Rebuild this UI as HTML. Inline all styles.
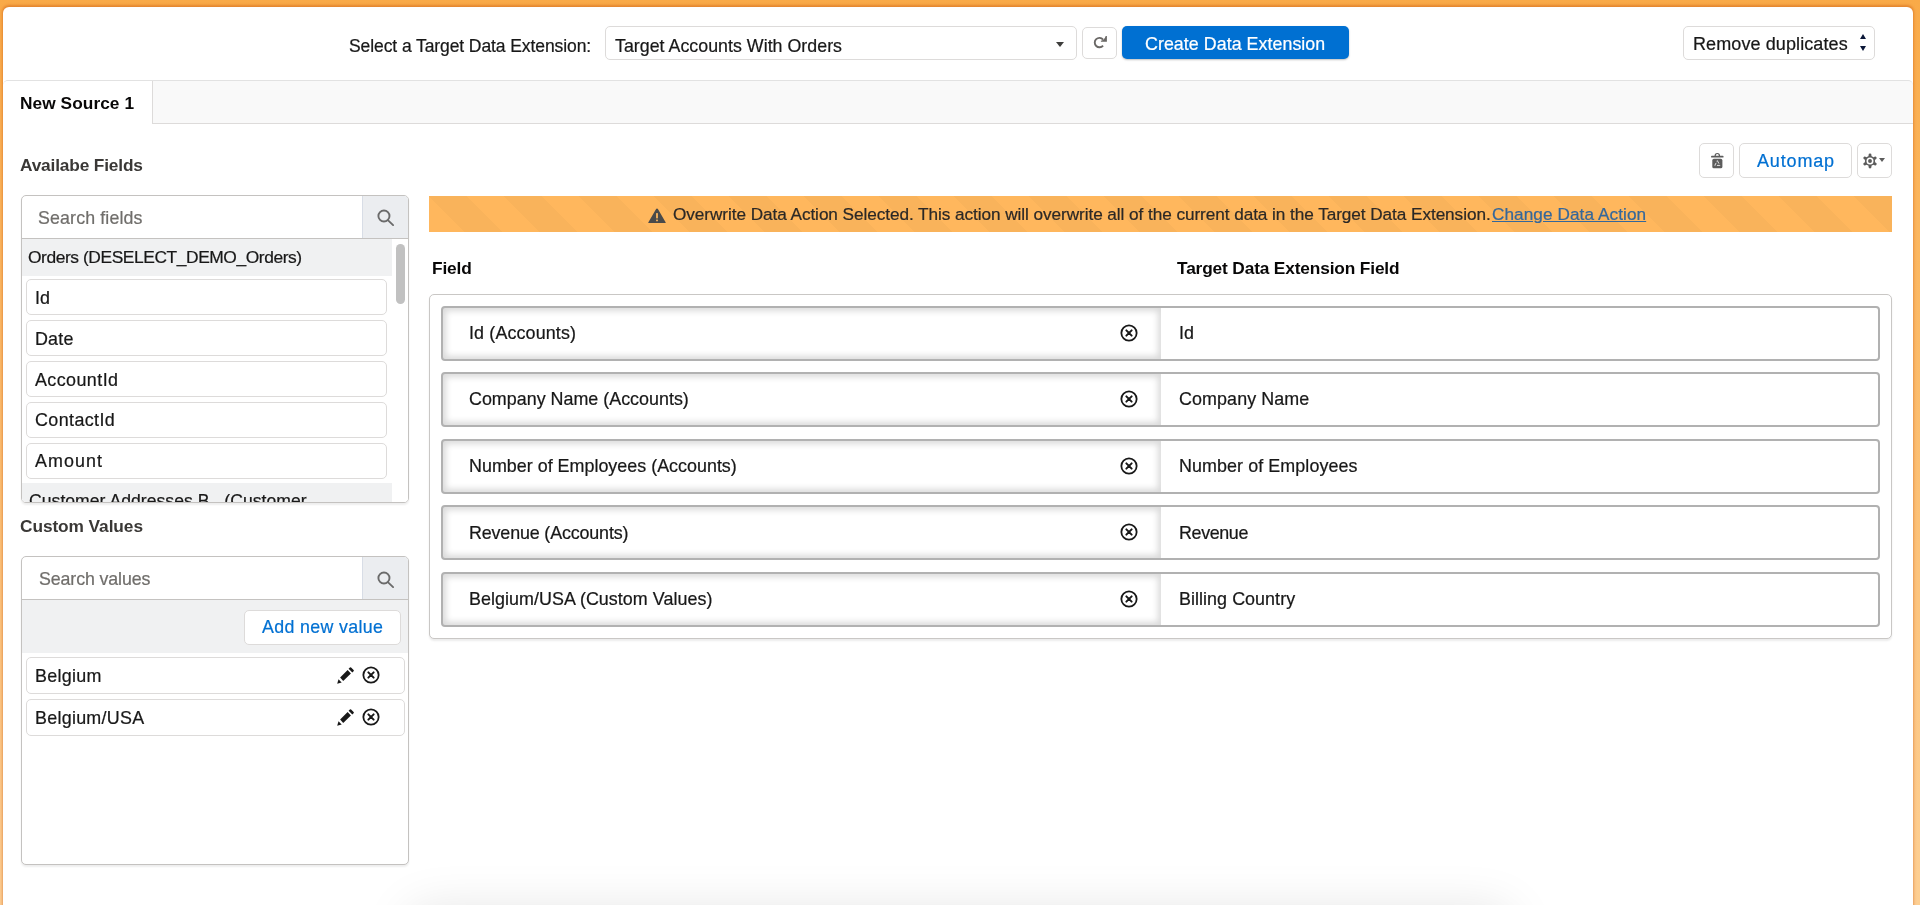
<!DOCTYPE html>
<html lang="en">
<head>
<meta charset="utf-8">
<title>Target Definition</title>
<style>
*{box-sizing:border-box;margin:0;padding:0}
html,body{width:1920px;height:905px;overflow:hidden}
body{background:linear-gradient(to bottom,#f9aa48 0,#fbb55c 200px,#fcc47e 600px,#fdcf93 905px);font-family:"Liberation Sans",sans-serif;color:#181818;font-size:17px;position:relative}
.abs{position:absolute}
.t{position:absolute;white-space:nowrap;line-height:20px;height:20px;will-change:transform}
.card{position:absolute;left:3px;top:6.6px;width:1910px;height:920px;background:#fff;border-radius:6px 6px 0 0;box-shadow:0 -.5px 2.5px 1px rgba(190,70,0,.36)}
.btn{position:absolute;background:#fff;border:1px solid #dddbda;border-radius:5px}
.t{-webkit-text-stroke:.22px currentColor}
.b{font-weight:bold;-webkit-text-stroke:0}
.panel{position:absolute;border:1px solid #c4c2c0;border-radius:5px;background:#fff;overflow:hidden;box-shadow:0 2px 2px rgba(0,0,0,.07)}
.item{position:absolute;border:1px solid #dddbda;border-radius:5px;background:#fff}
.row{position:absolute;left:441px;width:1439px;height:55px;border:2px solid #b1b1b1;border-radius:4px;background:#fff}
.row i{position:absolute;left:0;top:0;width:718px;height:51px;box-shadow:inset 0 0 6px 3px rgba(0,0,0,.15);border-radius:2px 0 0 2px}
</style>
</head>
<body>
<div class="card"></div>

<div class="t" id="lblSelect" style="left:349.0px;top:35.6px;font-size:17.5px;letter-spacing:-0.088px;">Select a Target Data Extension:</div>
<div class="btn" style="left:605px;top:26px;width:472px;height:34px"></div>
<div class="t" id="selTarget" style="left:615.4px;top:35.5px;font-size:17.8px;letter-spacing:0.026px;">Target Accounts With Orders</div>
<div class="abs" style="left:1055.7px;top:42.1px;width:0;height:0;border-left:4.7px solid transparent;border-right:4.7px solid transparent;border-top:5.2px solid #3e3e3c"></div>
<div class="btn" style="left:1082px;top:27px;width:35px;height:32px"></div>
<svg class="abs" style="left:1092px;top:35px" width="17" height="16" viewBox="0 0 17 16"><path d="M11.05 10.62 A4.7 4.7 0 1 1 11.05 4.58" fill="none" stroke="#6a6866" stroke-width="1.9"/><path d="M14.9 0.9 L14.9 6.8 L8.9 6.8 L8.9 5.7 Q12.2 5.2 13.7 0.9 Z" fill="#6a6866"/></svg>
<div class="abs" style="left:1122px;top:26px;width:227px;height:33px;background:#0070d2;border-radius:5px;box-shadow:0 1px 2px rgba(0,0,0,.25)"></div>
<div class="t" id="btnCreate" style="left:1144.5px;top:34.1px;font-size:17.8px;letter-spacing:0.065px;color:#fff">Create Data Extension</div>
<div class="btn" style="left:1683px;top:26px;width:192px;height:34px"></div>
<div class="t" id="selDup" style="left:1692.9px;top:34.2px;font-size:18px;letter-spacing:0.100px;">Remove duplicates</div>
<div class="abs" style="left:1860.2px;top:34px;width:0;height:0;border-left:3.6px solid transparent;border-right:3.6px solid transparent;border-bottom:5.4px solid #0b1738"></div>
<div class="abs" style="left:1860.2px;top:46.3px;width:0;height:0;border-left:3.6px solid transparent;border-right:3.6px solid transparent;border-top:5.4px solid #0b1738"></div>
<div class="abs" style="left:3px;top:80px;width:1910px;height:44px;background:#f9f9f9;border-top:1px solid #e2e2e2;border-bottom:1px solid #dddbda;border-radius:5px 5px 0 0"></div>
<div class="abs" style="left:3px;top:81px;width:149.5px;height:43px;background:#fff;border-right:1px solid #dddbda;border-radius:5px 0 0 0"></div>
<div class="t b" id="tab1" style="left:20.0px;top:93.2px;font-size:17.3px;letter-spacing:0.060px;color:#080707">New Source 1</div>
<div class="t b" id="hAvail" style="left:19.5px;top:154.8px;font-size:17.3px;letter-spacing:-0.163px;color:#3a3836">Availabe Fields</div>
<div class="panel" style="left:21px;top:194.5px;width:388px;height:308.5px">
<div class="abs" style="left:0;top:43px;width:386px;height:265px;background:#fff"></div>
<div class="abs" style="left:0;top:0;width:386px;height:43.5px;border-bottom:1px solid #c4c2c0"></div>
<div class="abs" style="left:340px;top:0;width:46px;height:42.5px;background:#ebedf0;border-left:1px solid #d8dde6"></div>
<div class="abs" style="left:0;top:43.5px;width:369.5px;height:36.5px;background:#f0f1f2"></div>
<div class="abs" style="left:0;top:287.5px;width:369.5px;height:30px;background:#f0f1f2"></div>
<div class="abs" style="left:374px;top:48px;width:9px;height:60px;border-radius:5px;background:#c1c1c1"></div>
</div>
<svg class="abs" style="left:376.5px;top:208.5px" width="18" height="18" viewBox="0 0 18 18"><circle cx="6.95" cy="7" r="5.55" fill="none" stroke="#6b6b6b" stroke-width="1.9"/><path d="M11.1 11.4 L16.1 16.1" stroke="#6b6b6b" stroke-width="1.9" stroke-linecap="round"/></svg>
<div class="t" id="phFields" style="left:38.2px;top:207.8px;font-size:17.8px;letter-spacing:0.142px;color:#706e6b">Search fields</div>
<div class="t" id="grpOrders" style="left:28.0px;top:247.1px;font-size:17.4px;letter-spacing:-0.427px;">Orders (DESELECT_DEMO_Orders)</div>
<div class="item" style="left:25.5px;top:279.4px;width:361.5px;height:36px"></div>
<div class="t" id="fld0" style="left:34.6px;top:288.2px;font-size:17.9px;letter-spacing:0.000px;">Id</div>
<div class="item" style="left:25.5px;top:320.2px;width:361.5px;height:36px"></div>
<div class="t" id="fld1" style="left:34.6px;top:328.9px;font-size:17.9px;letter-spacing:0.201px;">Date</div>
<div class="item" style="left:25.5px;top:361.1px;width:361.5px;height:36px"></div>
<div class="t" id="fld2" style="left:34.6px;top:369.7px;font-size:17.9px;letter-spacing:0.428px;">AccountId</div>
<div class="item" style="left:25.5px;top:401.9px;width:361.5px;height:36px"></div>
<div class="t" id="fld3" style="left:34.6px;top:410.4px;font-size:17.9px;letter-spacing:0.403px;">ContactId</div>
<div class="item" style="left:25.5px;top:442.8px;width:361.5px;height:36px"></div>
<div class="t" id="fld4" style="left:34.6px;top:451.2px;font-size:17.9px;letter-spacing:1.046px;">Amount</div>
<div class="abs" style="left:22px;top:488px;width:368px;height:14px;overflow:hidden"><div class="t" id="grpCust" style="left:6.6px;top:3.3px;font-size:17.6px;letter-spacing:.03px">Customer Addresses B_ (Customer</div></div>
<div class="t b" id="hCustom" style="left:20.1px;top:516.4px;font-size:17.3px;letter-spacing:-0.074px;color:#3a3836">Custom Values</div>
<div class="panel" style="left:21px;top:556px;width:388px;height:308.5px">
<div class="abs" style="left:0;top:0;width:386px;height:43px;border-bottom:1px solid #c4c2c0"></div>
<div class="abs" style="left:340px;top:0;width:46px;height:42px;background:#ebedf0;border-left:1px solid #d8dde6"></div>
<div class="abs" style="left:0;top:43px;width:386px;height:53px;background:#f0f1f2"></div>
</div>
<svg class="abs" style="left:376.5px;top:570.5px" width="18" height="18" viewBox="0 0 18 18"><circle cx="6.95" cy="7" r="5.55" fill="none" stroke="#6b6b6b" stroke-width="1.9"/><path d="M11.1 11.4 L16.1 16.1" stroke="#6b6b6b" stroke-width="1.9" stroke-linecap="round"/></svg>
<div class="t" id="phValues" style="left:38.5px;top:569.4px;font-size:17.8px;letter-spacing:-0.107px;color:#706e6b">Search values</div>
<div class="btn" style="left:244px;top:610px;width:156.5px;height:34.6px"></div>
<div class="t" id="btnAdd" style="left:261.7px;top:617.3px;font-size:17.8px;letter-spacing:0.354px;color:#0070d2">Add new value</div>
<div class="item" style="left:26px;top:657.0px;width:378.5px;height:37px"></div>
<div class="t" id="cv0" style="left:34.8px;top:666.4px;font-size:17.9px;letter-spacing:0.310px;">Belgium</div>
<svg class="abs" style="left:337.2px;top:667.1px" width="17" height="17" viewBox="0 0 17 17"><path d="M0.2 16.8 L1.5 12.2 L4.7 15.5 Z" fill="#181818"/><path d="M3.1 10.6 L10.6 3.1 L13.9 6.4 L6.2 14 Z" fill="#181818"/><path d="M11.6 1.8 L12.9 0.5 Q13.5 -0.1 14.1 0.5 L16.6 3 Q17.2 3.6 16.6 4.2 L15.3 5.4 Z" fill="#181818"/></svg>
<svg class="abs" style="left:362.1px;top:666.1px" width="18" height="18" viewBox="0 0 18 18"><circle cx="9" cy="9" r="7.65" fill="none" stroke="#181818" stroke-width="1.8"/><path d="M6.35 6.35 L11.65 11.65 M11.65 6.35 L6.35 11.65" stroke="#181818" stroke-width="2" stroke-linecap="round"/></svg>
<div class="item" style="left:26px;top:699.0px;width:378.5px;height:37px"></div>
<div class="t" id="cv1" style="left:34.8px;top:708.4px;font-size:17.9px;letter-spacing:0.269px;">Belgium/USA</div>
<svg class="abs" style="left:337.2px;top:709.1px" width="17" height="17" viewBox="0 0 17 17"><path d="M0.2 16.8 L1.5 12.2 L4.7 15.5 Z" fill="#181818"/><path d="M3.1 10.6 L10.6 3.1 L13.9 6.4 L6.2 14 Z" fill="#181818"/><path d="M11.6 1.8 L12.9 0.5 Q13.5 -0.1 14.1 0.5 L16.6 3 Q17.2 3.6 16.6 4.2 L15.3 5.4 Z" fill="#181818"/></svg>
<svg class="abs" style="left:362.1px;top:708.1px" width="18" height="18" viewBox="0 0 18 18"><circle cx="9" cy="9" r="7.65" fill="none" stroke="#181818" stroke-width="1.8"/><path d="M6.35 6.35 L11.65 11.65 M11.65 6.35 L6.35 11.65" stroke="#181818" stroke-width="2" stroke-linecap="round"/></svg>
<div class="btn" style="left:1699px;top:143px;width:35px;height:35px"></div>
<svg class="abs" style="left:1710px;top:152px" width="15" height="17" viewBox="0 0 15 17"><path d="M5.1 4.2 Q5.1 1.5 7.3 1.5 Q9.5 1.5 9.5 4.2" fill="none" stroke="#5c5c5c" stroke-width="1.2"/><rect x="1" y="3.8" width="12.6" height="1.8" rx="0.9" fill="#5c5c5c"/><rect x="2.3" y="6.8" width="10.1" height="9.5" rx="1.6" fill="#5c5c5c"/><path d="M7.35 8.6 L9.9 13.4 L4.8 13.4 Z" fill="none" stroke="#e4e4e4" stroke-width="1" stroke-dasharray="3.4 1.6" stroke-linejoin="round"/></svg>
<div class="btn" style="left:1739px;top:143px;width:113px;height:35px"></div>
<div class="t" id="btnAutomap" style="left:1756.6px;top:151.0px;font-size:18px;letter-spacing:0.842px;color:#0070d2">Automap</div>
<div class="btn" style="left:1857px;top:143px;width:35px;height:35px"></div>
<svg class="abs" style="left:1862.2px;top:152.65px" width="16" height="16" viewBox="-8 -8 16 16"><g stroke="#5c5c5c" stroke-width="2.9" stroke-linecap="round"><line x1="0" y1="0" x2="0.00" y2="-6.00"/><line x1="0" y1="0" x2="-5.20" y2="-3.00"/><line x1="0" y1="0" x2="-5.20" y2="3.00"/><line x1="0" y1="0" x2="-0.00" y2="6.00"/><line x1="0" y1="0" x2="5.20" y2="3.00"/><line x1="0" y1="0" x2="5.20" y2="-3.00"/></g><circle r="5.1" fill="#5c5c5c"/><circle r="3.5" fill="#fff"/><circle r="1.95" fill="#5c5c5c"/></svg>
<div class="abs" style="left:1878.8px;top:158.3px;width:0;height:0;border-left:3px solid transparent;border-right:3px solid transparent;border-top:4.4px solid #5c5c5c"></div>
<div class="abs" style="left:429px;top:196px;width:1463px;height:35.7px;background-color:#ffb75d;background-image:linear-gradient(45deg,rgba(0,0,0,.022) 25%,transparent 25%,transparent 50%,rgba(0,0,0,.022) 50%,rgba(0,0,0,.022) 75%,transparent 75%,transparent);background-size:75px 75px"></div>
<svg class="abs" style="left:648px;top:207.5px" width="18" height="15.5" viewBox="0 0 18 15.5"><path d="M9 0.4 Q9.6 0.4 9.9 1 L17.6 14.2 Q18 15.1 17 15.1 L1 15.1 Q0 15.1 0.4 14.2 L8.1 1 Q8.4 0.4 9 0.4 Z" fill="#4a4a4a"/><rect x="8.1" y="5" width="1.8" height="5.4" rx="0.6" fill="#ffb75d"/><rect x="8.1" y="11.4" width="1.8" height="1.9" rx="0.6" fill="#ffb75d"/></svg>
<div class="t" id="bannerTxt" style="left:673.2px;top:204.4px;font-size:17.2px;letter-spacing:-0.064px;color:#2b2826">Overwrite Data Action Selected. This action will overwrite all of the current data in the Target Data Extension.</div>
<div class="t" id="bannerLink" style="left:1491.5px;top:204.4px;font-size:17.2px;letter-spacing:0.071px;color:#34679b;text-decoration:underline">Change Data Action</div>
<div class="t b" id="hField" style="left:431.7px;top:257.7px;font-size:17.3px;letter-spacing:-0.132px;color:#080707">Field</div>
<div class="t b" id="hTarget" style="left:1176.9px;top:257.7px;font-size:17.3px;letter-spacing:-0.143px;color:#080707">Target Data Extension Field</div>
<div class="abs" style="left:429px;top:294px;width:1463px;height:345px;border:1px solid #c9c7c5;border-radius:5px;background:#fff;box-shadow:0 2px 2px rgba(0,0,0,.08)"></div>
<div class="row" style="top:305.8px"><i></i></div>
<div class="t" id="ml0" style="left:468.9px;top:322.7px;font-size:17.9px;letter-spacing:0.133px;">Id (Accounts)</div>
<div class="t" id="mr0" style="left:1178.9px;top:322.7px;font-size:17.9px;letter-spacing:0.000px;">Id</div>
<svg class="abs" style="left:1120.3px;top:324.0px" width="18" height="18" viewBox="0 0 18 18"><circle cx="9" cy="9" r="7.65" fill="none" stroke="#181818" stroke-width="1.8"/><path d="M6.35 6.35 L11.65 11.65 M11.65 6.35 L6.35 11.65" stroke="#181818" stroke-width="2" stroke-linecap="round"/></svg>
<div class="row" style="top:372.2px"><i></i></div>
<div class="t" id="ml1" style="left:468.9px;top:389.3px;font-size:17.9px;letter-spacing:0.002px;">Company Name (Accounts)</div>
<div class="t" id="mr1" style="left:1178.9px;top:389.3px;font-size:17.9px;letter-spacing:0.094px;">Company Name</div>
<svg class="abs" style="left:1120.3px;top:390.45px" width="18" height="18" viewBox="0 0 18 18"><circle cx="9" cy="9" r="7.65" fill="none" stroke="#181818" stroke-width="1.8"/><path d="M6.35 6.35 L11.65 11.65 M11.65 6.35 L6.35 11.65" stroke="#181818" stroke-width="2" stroke-linecap="round"/></svg>
<div class="row" style="top:438.7px"><i></i></div>
<div class="t" id="ml2" style="left:468.9px;top:456.0px;font-size:17.9px;letter-spacing:0.011px;">Number of Employees (Accounts)</div>
<div class="t" id="mr2" style="left:1178.9px;top:456.0px;font-size:17.9px;letter-spacing:0.083px;">Number of Employees</div>
<svg class="abs" style="left:1120.3px;top:456.9px" width="18" height="18" viewBox="0 0 18 18"><circle cx="9" cy="9" r="7.65" fill="none" stroke="#181818" stroke-width="1.8"/><path d="M6.35 6.35 L11.65 11.65 M11.65 6.35 L6.35 11.65" stroke="#181818" stroke-width="2" stroke-linecap="round"/></svg>
<div class="row" style="top:505.2px"><i></i></div>
<div class="t" id="ml3" style="left:468.9px;top:522.6px;font-size:17.9px;letter-spacing:-0.153px;">Revenue (Accounts)</div>
<div class="t" id="mr3" style="left:1178.9px;top:522.6px;font-size:17.9px;letter-spacing:-0.371px;">Revenue</div>
<svg class="abs" style="left:1120.3px;top:523.35px" width="18" height="18" viewBox="0 0 18 18"><circle cx="9" cy="9" r="7.65" fill="none" stroke="#181818" stroke-width="1.8"/><path d="M6.35 6.35 L11.65 11.65 M11.65 6.35 L6.35 11.65" stroke="#181818" stroke-width="2" stroke-linecap="round"/></svg>
<div class="row" style="top:571.6px"><i></i></div>
<div class="t" id="ml4" style="left:468.9px;top:589.3px;font-size:17.9px;letter-spacing:0.043px;">Belgium/USA (Custom Values)</div>
<div class="t" id="mr4" style="left:1178.9px;top:589.3px;font-size:17.9px;letter-spacing:0.053px;">Billing Country</div>
<svg class="abs" style="left:1120.3px;top:589.8px" width="18" height="18" viewBox="0 0 18 18"><circle cx="9" cy="9" r="7.65" fill="none" stroke="#181818" stroke-width="1.8"/><path d="M6.35 6.35 L11.65 11.65 M11.65 6.35 L6.35 11.65" stroke="#181818" stroke-width="2" stroke-linecap="round"/></svg>
<div class="abs" style="left:418px;top:918px;width:1084px;height:60px;border-radius:6px;box-shadow:0 0 50px 8px rgba(0,0,0,.115)"></div>
</body>
</html>
